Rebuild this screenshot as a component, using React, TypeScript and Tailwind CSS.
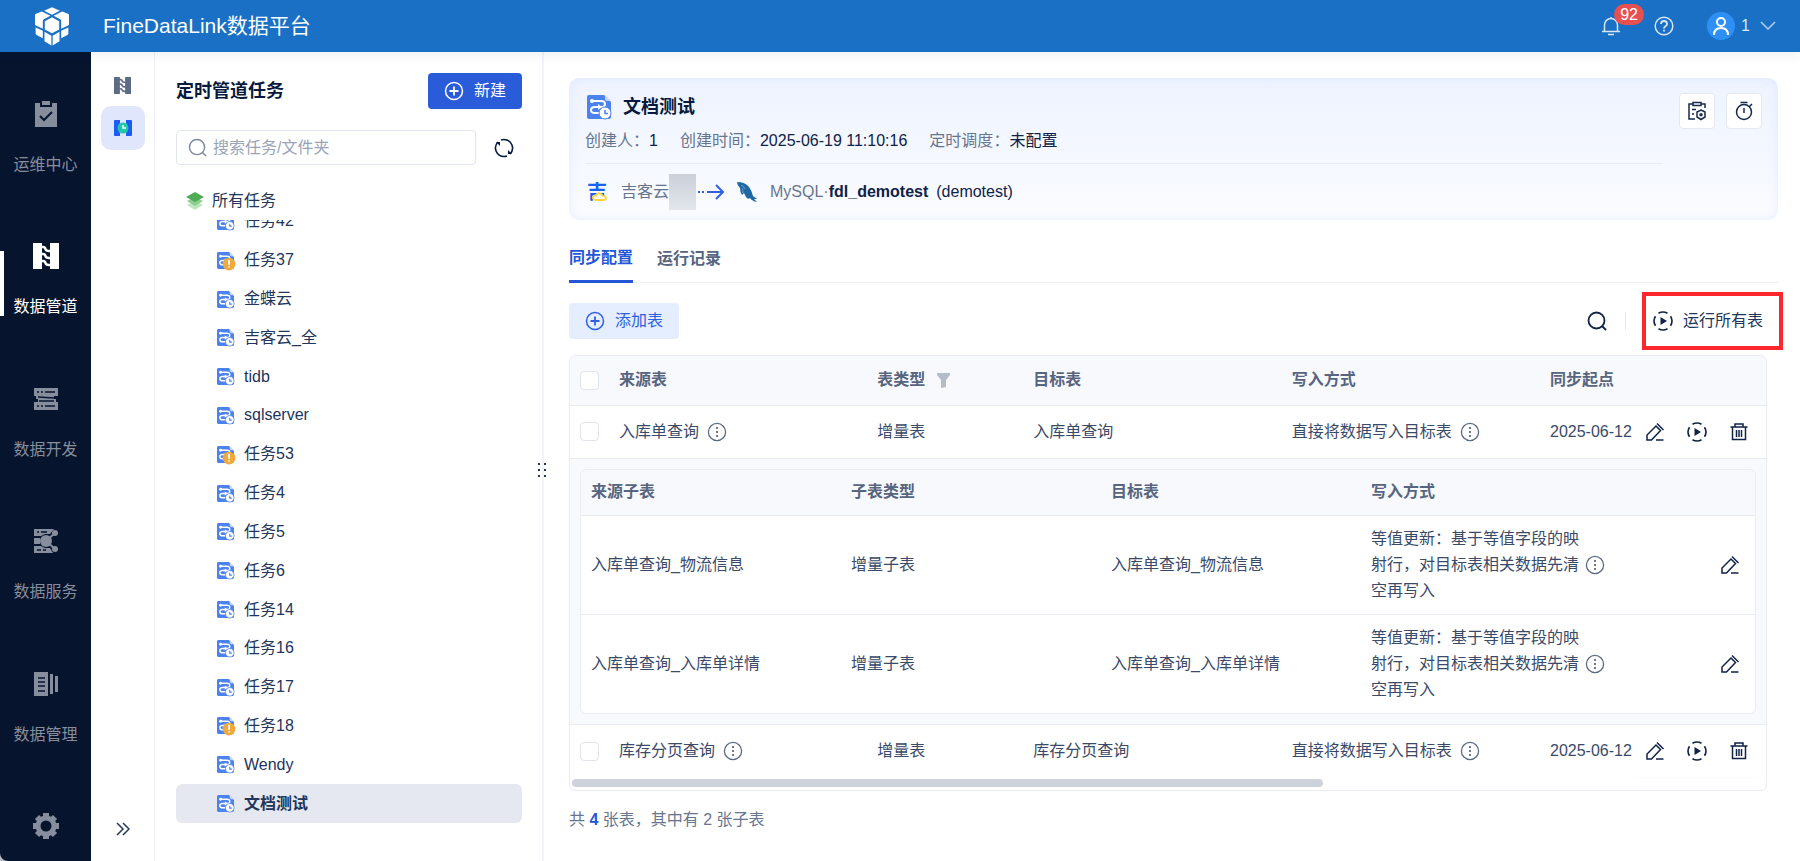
import { ReactNode, useState } from 'react';

interface IconProps {
  className?: string
}

interface Task {
  name: string
  warning?: boolean
}

interface SyncTable {
  source: string
  type: string
  target: string
  writeMode: string
  startPoint: string
  children?: SubTable[]
}

interface SubTable {
  source: string
  type: string
  target: string
  writeMode: string
}

const tasks: Task[] = [
  { name: '任务42' },
  { name: '任务37', warning: true },
  { name: '金蝶云' },
  { name: '吉客云_全' },
  { name: 'tidb' },
  { name: 'sqlserver' },
  { name: '任务53', warning: true },
  { name: '任务4' },
  { name: '任务5' },
  { name: '任务6' },
  { name: '任务14' },
  { name: '任务16' },
  { name: '任务17' },
  { name: '任务18', warning: true },
  { name: 'Wendy' },
  { name: '文档测试' },
];

const subWriteMode = '等值更新：基于等值字段的映射行，对目标表相关数据先清空再写入';

const syncTables: SyncTable[] = [
  {
    source: '入库单查询',
    type: '增量表',
    target: '入库单查询',
    writeMode: '直接将数据写入目标表',
    startPoint: '2025-06-12',
    children: [
      { source: '入库单查询_物流信息', type: '增量子表', target: '入库单查询_物流信息', writeMode: subWriteMode },
      { source: '入库单查询_入库单详情', type: '增量子表', target: '入库单查询_入库单详情', writeMode: subWriteMode },
    ],
  },
  {
    source: '库存分页查询',
    type: '增量表',
    target: '库存分页查询',
    writeMode: '直接将数据写入目标表',
    startPoint: '2025-06-12',
  },
];

function Logo() {
  return (
    <svg viewBox="0 0 110 118" className="h-[39px] w-9" fill="#fff">
      <path d="M55 0 79 11 55 23 31 11Z" />
      <path d="M3 26Q2 22 6 20L24 13 50 26 30 37Q27 39 27 43V66L6 56Q3 54 3 51Z" />
      <path d="M107 26Q108 22 104 20L86 13 60 26 80 37Q83 39 83 43V66L104 56Q107 54 107 51Z" />
      <path d="M55 31 77 43V68L55 80 33 68V43Z" />
      <path d="M5 62 27 72V95L8 85Q5 83 5 80Z" />
      <path d="M105 62 83 72V95L102 85Q105 83 105 80Z" />
      <path d="M32 75 53 87V117L32 104Z" />
      <path d="M78 75 57 87V117L78 104Z" />
    </svg>
  );
}

function ClipboardIcon({ className }: IconProps) {
  return (
    <svg viewBox="0 0 26 26" className={className}>
      <path d="M2 2H7V6H19V2H24V26H2Z" fill="currentColor" />
      <path d="M9 0H17V4H9Z" fill="currentColor" />
      <path d="M7 15 11 19 19 11" fill="none" stroke="#06142e" strokeWidth="2" />
    </svg>
  );
}

function PipelineIcon({ className }: IconProps) {
  return (
    <svg viewBox="0 0 26 26" className={className}>
      <path d="M0 0H9V26H0ZM17 0H26V26H17Z" fill="currentColor" />
      <path
        d="M8 4H10Q12 4 12.500 6T16 8H18M8 11H10Q12 11 12.500 13T16 15H18M8 18H10Q12 18 12.500 20T16 22H18"
        fill="none"
        stroke="currentColor"
        strokeWidth="2.600"
      />
    </svg>
  );
}

function DevelopIcon({ className }: IconProps) {
  return (
    <svg viewBox="0 0 26 26" className={className}>
      <path d="M1 2H25V10H21V13H23V16H25V24H1V16H5V13H3V10H1Z" fill="currentColor" />
      <path d="M4 6H6M8 6H10M12 6H22M4 20H6M8 20H10M12 20H22M5 11 21 12M6 15H21" fill="none" stroke="#06142e" strokeWidth="1.4" />
    </svg>
  );
}

function ServiceIcon({ className }: IconProps) {
  return (
    <svg viewBox="0 0 26 26" className={className}>
      <path d="M1 1H21L17 6H12L8 8H1ZM1 10H7V16H1ZM1 18H8L12 20H17L20 25H1Z" fill="currentColor" />
      <path d="M4 4H6M8 4H14M4 22H8M10 22H13" stroke="#06142e" strokeWidth="1.4" />
      <circle cx="13" cy="13" r="6" fill="currentColor" />
      <path d="M13 13 22 5M13 13 22 21" stroke="currentColor" strokeWidth="2" />
      <circle cx="22" cy="5" r="3" fill="currentColor" />
      <circle cx="22" cy="21" r="3" fill="currentColor" />
    </svg>
  );
}

function ManageIcon({ className }: IconProps) {
  return (
    <svg viewBox="0 0 26 26" className={className}>
      <path d="M1 1H15V25H1ZM17 3H20V23H17ZM22 5H25V21H22Z" fill="currentColor" />
      <path d="M5 7H12M5 11H12M5 15H12M5 20H12" stroke="#06142e" strokeWidth="1.6" />
    </svg>
  );
}

function GearIcon({ className }: IconProps) {
  return (
    <svg viewBox="0 0 26 26" className={className}>
      <circle cx="13" cy="13" r="8" fill="none" stroke="currentColor" strokeWidth="5" />
      <path
        d="M13 0V5M13 21V26M0 13H5M21 13H26M4 4 7 7M19 19 22 22M22 4 19 7M4 22 7 19"
        stroke="currentColor"
        strokeWidth="6"
      />
    </svg>
  );
}

function TimedPipelineIcon() {
  return (
    <svg viewBox="0 0 18 18" className="size-[18px]">
      <path d="M1 1H6V4Q3 9 6 14V17H1Q0 17 0 16V2Q0 1 1 1ZM17 1H12V4Q15 9 12 14V17H17Q18 17 18 16V2Q18 1 17 1Z" fill="#1a5cf5" />
      <circle cx="9" cy="9" r="5.5" fill="#22c7a5" />
      <path d="M9 6V9H12" fill="none" stroke="#fff" strokeWidth="1.5" />
    </svg>
  );
}

function TaskIcon({ className, warning }: IconProps & { warning?: boolean }) {
  return (
    <svg viewBox="0 0 24 24" className={className} overflow="visible">
      <path d="M2 0H17L24 7V22Q24 24 22 24H2Q0 24 0 22V2Q0 0 2 0Z" fill="#4c82ee" />
      <path d="M18 0 24 6H20Q18 6 18 4Z" fill="#c3d6fb" />
      <path d="M5 6H14Q18 6 18 9T15 12H8Q4 12 4 15T8 18H12" fill="none" stroke="#fff" strokeWidth="2" />
      <circle cx="5" cy="6" r="2" fill="#fff" />
      <path d="M11 9 15 12 11 15Z" fill="#fff" />
      {warning ? (
        <>
          <circle cx="17" cy="17" r="9" fill="#f2a93b" />
          <path d="M17 11V18M17 20V22" stroke="#fff" strokeWidth="2.5" />
        </>
      ) : (
        <>
          <circle cx="18" cy="18" r="6" fill="#fff" stroke="#4c82ee" />
          <path d="M18 15V18.500H21" fill="none" stroke="#4c82ee" strokeWidth="1.600" />
        </>
      )}
    </svg>
  );
}

function LayersIcon() {
  return (
    <svg viewBox="0 0 18 18" className="size-[18px]">
      <path d="M1 13 9 9 17 13 9 18Z" fill="#bfe5c1" />
      <path d="M1 9 9 5 17 9 9 14Z" fill="#8ccd90" />
      <path d="M0 5 9 0 18 5 9 10Z" fill="#4fac56" />
    </svg>
  );
}

function PlusCircleIcon() {
  return (
    <svg viewBox="0 0 20 20" className="size-5" fill="none" stroke="currentColor" strokeWidth="1.500">
      <circle cx="10" cy="10" r="8.500" />
      <path d="M10 5.500V14.500M5.500 10H14.500" strokeWidth="1.800" />
    </svg>
  );
}

function SearchIcon({ className }: IconProps) {
  return (
    <svg viewBox="0 0 20 20" className={className} fill="none" stroke="currentColor">
      <circle cx="9.500" cy="9.500" r="8" />
      <path d="M15 15 19 19" />
    </svg>
  );
}

function RefreshIcon() {
  return (
    <svg viewBox="0 0 20 20" className="size-5" fill="none" stroke="#071a3d" strokeWidth="1.600">
      <path d="M4 4A8.500 8.500 0 0 0 10 18.500M16 16A8.500 8.500 0 0 0 10 1.500" />
      <path d="M10 1.500A8.500 8.500 0 0 0 7 2M10 18.500A8.500 8.500 0 0 0 13 18" />
      <path d="M2 4H6V8ZM18 16H14V12Z" fill="#071a3d" stroke="none" />
    </svg>
  );
}

function RunIcon() {
  return (
    <svg viewBox="0 0 20 20" className="size-5" fill="none" stroke="#0f2247" strokeWidth="1.600">
      <path d="M5.500 2.300A9 9 0 0 1 14.500 2.300M17.500 5.200A9 9 0 0 1 17.500 14.800M14.500 17.700A9 9 0 0 1 5.500 17.700M2.500 14.800A9 9 0 0 1 2.500 5.200" />
      <path d="M7.500 6 14 10 7.500 14Z" fill="#0f2247" stroke="none" />
    </svg>
  );
}

function EditIcon() {
  return (
    <svg viewBox="0 0 20 20" className="size-5" fill="none" stroke="#0f2247" strokeWidth="1.500">
      <path d="M2 18V13L11 4 15.500 8.500 6.500 18ZM11 18H18.500M12 1.500 18.500 8" />
    </svg>
  );
}

function TrashIcon() {
  return (
    <svg viewBox="0 0 20 20" className="size-5" fill="none" stroke="#0f2247" strokeWidth="1.500">
      <path d="M1.500 5H18.500M6 5V2H14V5M3.500 5V17.500H16.500V5M7.500 8V15M10 8V15M12.500 8V15" />
    </svg>
  );
}

function MoreIcon() {
  return (
    <svg viewBox="0 0 20 20" className="size-5 shrink-0" fill="none" stroke="#5c6b85">
      <circle cx="10" cy="10" r="8.600" strokeWidth="1.300" />
      <path d="M10 5V7M10 9V11M10 13V15" strokeWidth="1.800" />
    </svg>
  );
}

function JikeyunIcon() {
  return (
    <svg viewBox="0 0 20 20" className="size-5">
      <text x="0" y="17" fontSize="20" fontWeight="700" fill="#1463f3">吉</text>
      <path
        d="M8 18Q5 17 6 14.500Q7 13 9 13.500Q11 10 14 12Q15 13 16 14Q19 14 19 16T17 18Z"
        fill="#fff"
        stroke="#fbd63c"
        strokeWidth="1.800"
      />
    </svg>
  );
}

function DolphinIcon() {
  return (
    <svg viewBox="0 0 21 21" className="size-[21px]">
      <path
        d="M0 0Q8 0 12 5Q15 9 16 14L20 17 17 17 20 20Q15 19 13 16Q11 18 9 15L7 11 5 13Q3 10 3 6Q0 3 0 0Z"
        fill="#2068a4"
      />
      <path d="M4 3Q7 4 8 7M6 11Q6 7 5 6" fill="none" stroke="#7fa9cd" strokeWidth="0.800" />
    </svg>
  );
}

const navItems = [
  { label: '运维中心', Icon: ClipboardIcon },
  { label: '数据管道', Icon: PipelineIcon, active: true },
  { label: '数据开发', Icon: DevelopIcon },
  { label: '数据服务', Icon: ServiceIcon },
  { label: '数据管理', Icon: ManageIcon },
];

function TopBar() {
  return (
    <header className="relative z-20 flex h-[52px] shrink-0 items-center bg-[#1a70c5] pl-[34px] pr-6 text-white shadow-[0_2px_12px_rgba(20,40,90,0.08)]">
      <Logo />
      <h1 className="ml-[33px] text-[21px]">FineDataLink数据平台</h1>
      <div className="ml-auto flex items-center">
        <button aria-label="消息" className="relative">
          <svg viewBox="0 0 20 20" className="size-5" fill="none" stroke="#d7e6f6" strokeWidth="1.500">
            <path d="M3.500 15V9A6.500 6.500 0 0 1 16.500 9V15M1 15.500H19M7 18.500H13M10 1V3" />
          </svg>
          <span className="absolute -top-3 left-[13px] flex h-[21px] w-[30px] items-center justify-center rounded-full bg-[#e8504f] text-base">
            92
          </span>
        </button>
        <button aria-label="帮助" className="ml-[33px]">
          <svg viewBox="0 0 20 20" className="size-5" fill="none" stroke="#d7e6f6" strokeWidth="1.500">
            <circle cx="10" cy="10" r="8.800" />
            <path d="M7 8Q7 5 10 5T13 8Q13 9.500 11.500 10.200Q10 11 10 12.500M10 13.800V15.600" strokeWidth="1.800" />
          </svg>
        </button>
        <button className="ml-[33px] flex items-center">
          <span className="flex size-7 items-center justify-center rounded-full bg-[#2e90f5]">
            <svg viewBox="0 0 18 18" className="size-[18px]" fill="none" stroke="#fff" strokeWidth="2">
              <circle cx="9" cy="5" r="4" />
              <path d="M2 18Q2 11 9 11T16 18" />
            </svg>
          </span>
          <span className="ml-1.5 text-base text-[#d7e6f6]">1</span>
          <svg viewBox="0 0 16 10" className="ml-2.5 h-2.5 w-4" fill="none" stroke="#b5cfec" strokeWidth="1.500">
            <path d="M1 1 8 8 15 1" />
          </svg>
        </button>
      </div>
    </header>
  );
}

function SideNav() {
  return (
    <div className="shrink-0 bg-[#b9bcc2]">
      <nav className="flex h-full w-[91px] flex-col items-center justify-between rounded-bl-lg bg-[#06142e] pb-[22px] pt-[49px] text-[#868e9d]">
        {navItems.map(({ label, Icon, active }) => (
          <a
            key={label}
            href="#"
            className={active
              ? 'relative flex w-full flex-col items-center gap-[26px] text-white'
              : 'relative flex w-full flex-col items-center gap-[26px]'}
          >
            {active && <span className="absolute left-0 top-2 h-[65px] w-1 bg-white" />}
            <Icon className="size-[26px]" />
            <span className="text-base">{label}</span>
          </a>
        ))}
        <a href="#" aria-label="设置">
          <GearIcon className="size-[26px]" />
        </a>
      </nav>
    </div>
  );
}

function PipelineSwitch() {
  return (
    <div className="flex w-16 shrink-0 flex-col items-center border-r border-[#eceef4] pb-5 pt-[25px]">
      <button aria-label="实时管道任务" className="text-[#5d6b85]">
        <PipelineIcon className="size-[17px]" />
      </button>
      <button aria-label="定时管道任务" className="mt-3 flex size-11 items-center justify-center rounded-[10px] bg-[#e0e6fb]">
        <TimedPipelineIcon />
      </button>
      <button aria-label="展开" className="mt-auto">
        <svg viewBox="0 0 14 14" className="h-6 w-3.5" fill="none" stroke="#26395c" strokeWidth="1.500">
          <path d="M1 1 7 7 1 13M7 1 13 7 7 13" />
        </svg>
      </button>
    </div>
  );
}

function TaskPanel() {
  const [selected, setSelected] = useState('文档测试');

  return (
    <aside className="relative flex w-[389px] shrink-0 flex-col border-r-2 border-[#f1f3f8] pb-[38px] pl-[21px] pr-5 pt-[21px]">
      <div className="flex items-center justify-between">
        <h2 className="text-lg font-bold text-[#071a3d]">定时管道任务</h2>
        <button className="flex h-9 items-center gap-2.5 rounded bg-[#2a5cda] px-4 text-base text-white">
          <PlusCircleIcon />
          新建
        </button>
      </div>
      <div className="mt-[21px] flex items-center">
        <label className="flex h-[35px] w-[300px] items-center gap-1.5 rounded border border-[#e2e6f0] px-[11px] text-[#7c88a0]">
          <SearchIcon className="size-[19px] shrink-0 stroke-[1.5]" />
          <input
            aria-label="搜索任务"
            placeholder="搜索任务/文件夹"
            className="w-full text-base outline-none placeholder:text-[#9aa4b6]"
          />
        </label>
        <button aria-label="刷新" className="ml-[18px]">
          <RefreshIcon />
        </button>
      </div>
      <div className="mt-6 flex h-6 items-center gap-2 pl-2.5 text-[#22355a]">
        <LayersIcon />
        <span className="text-base">所有任务</span>
      </div>
      <div className="mt-[7px] min-h-0 flex-1 overflow-hidden">
        <ul className="-mt-[18px] flex h-[calc(100%+18px)] flex-col">
          {tasks.map((task) => (
            <li key={task.name} className="min-h-0 flex-1">
              <button
                onClick={() => setSelected(task.name)}
                className={task.name === selected
                  ? 'flex h-full w-full items-center gap-2.5 rounded-md bg-[#e5e8f0] pl-[41px] text-base font-bold text-[#22355a]'
                  : 'flex h-full w-full items-center gap-2.5 pl-[41px] text-base text-[#22355a]'}
              >
                <TaskIcon className="size-[17px]" warning={task.warning} />
                {task.name}
              </button>
            </li>
          ))}
        </ul>
      </div>
      <div className="absolute left-full top-1/2 z-10 mt-1 -ml-1 grid h-[18px] grid-cols-2 items-center gap-x-1.5">
        {[0, 1, 2, 3, 4, 5].map((i) => (
          <span key={i} className="size-0.5 bg-[#22355a]" />
        ))}
      </div>
    </aside>
  );
}

function Field({ label, children }: { label: string; children: ReactNode }) {
  return (
    <div className="flex">
      <dt className="text-[#67758e]">{label}：</dt>
      <dd className="text-[#0f2247]">{children}</dd>
    </div>
  );
}

function TaskHeader() {
  return (
    <section className="flex items-start justify-between rounded-[10px] bg-linear-to-b from-[#eef3ff] to-[#fafcff] px-4 pb-2 pt-[15px] shadow-[inset_0_0_10px_rgba(180,200,250,0.25)]">
      <div className="w-[1078px]">
        <div className="flex h-7 items-center gap-3">
          <TaskIcon className="ml-0.5 size-6" />
          <h2 className="text-lg font-bold text-[#071a3d]">文档测试</h2>
        </div>
        <dl className="mt-2 flex h-6 items-center gap-[22px] text-base">
          <Field label="创建人">1</Field>
          <Field label="创建时间">2025-06-19 11:10:16</Field>
          <Field label="定时调度">未配置</Field>
        </dl>
        <div className="mt-2.5 flex h-[49px] items-center border-t border-[#e6eaf2] pt-2 text-base">
          <span className="ml-0.5">
            <JikeyunIcon />
          </span>
          <span className="ml-3.5 text-[#67758e]">吉客云</span>
          <span className="h-9 w-[27px] bg-linear-to-b from-[#cbd0d9] to-[#e2e6ec]" />
          <svg viewBox="0 0 27 16" className="ml-0.5 h-4 w-[27px]" fill="none" stroke="#2f5fe0" strokeWidth="2">
            <path d="M0 8H2M4 8H6M9 8H25M18 1 25 8 18 15" />
          </svg>
          <span className="ml-3">
            <DolphinIcon />
          </span>
          <span className="ml-3 text-[#67758e]">
            MySQL·<b className="text-[#0f2247]">fdl_demotest</b>
          </span>
          <span className="ml-2 text-[#0f2247]">(demotest)</span>
        </div>
      </div>
      <div className="flex gap-[11px]">
        <button aria-label="任务设置" className="flex size-9 items-center justify-center rounded border border-[#e4e8f1] bg-white">
          <svg viewBox="0 0 20 20" className="size-5" fill="none" stroke="#16294e" strokeWidth="1.500">
            <path d="M8 18H2V3H6M14 3H18V7M6 1.500H14V4.500H6ZM5 8.500H9M5 13H7" />
            <path d="M14 9 18 11V16L14 18.500 10 16V11Z" />
            <circle cx="14" cy="13.800" r="1" />
          </svg>
        </button>
        <button aria-label="定时设置" className="flex size-9 items-center justify-center rounded border border-[#e4e8f1] bg-white">
          <svg viewBox="0 0 20 20" className="size-5" fill="none" stroke="#16294e" strokeWidth="1.500">
            <circle cx="10" cy="11" r="7.500" />
            <path d="M6.500 1.500H13.500M10 7V12M15.500 5.500 18 3" />
          </svg>
        </button>
      </div>
    </section>
  );
}

function Checkbox({ label }: { label: string }) {
  return (
    <input
      type="checkbox"
      aria-label={label}
      className="block size-[19px] appearance-none rounded border border-[#e0e4ee] bg-white checked:bg-[#2a5cda]"
    />
  );
}

function SubTableList({ rows }: { rows: SubTable[] }) {
  return (
    <div className="overflow-hidden rounded-md border border-[#e9ecf3]">
      <table className="w-full table-fixed">
        <colgroup>
          <col />
          <col />
          <col />
          <col />
          <col className="w-[134px]" />
        </colgroup>
        <thead>
          <tr className="h-[46px] text-left text-[#57657f]">
            <th className="pl-2.5">来源子表</th>
            <th className="pl-2.5">子表类型</th>
            <th className="pl-2.5">目标表</th>
            <th className="pl-2.5">写入方式</th>
            <th aria-label="操作" />
          </tr>
        </thead>
        <tbody>
          {rows.map((row) => (
            <tr key={row.source} className="border-t border-[#e9ecf3] bg-white">
              <td className="pl-2.5">{row.source}</td>
              <td className="pl-2.5">{row.type}</td>
              <td className="pl-2.5">{row.target}</td>
              <td className="py-2.5 pl-2.5">
                <div className="flex items-center gap-1.5">
                  <p className="w-[208px] leading-[26px]">{row.writeMode}</p>
                  <MoreIcon />
                </div>
              </td>
              <td>
                <button aria-label="编辑" className="ml-auto mr-[15px] block">
                  <EditIcon />
                </button>
              </td>
            </tr>
          ))}
        </tbody>
      </table>
    </div>
  );
}

function SyncTableRows({ row }: { row: SyncTable }) {
  return (
    <>
      <tr className="h-[53px] border-t border-[#e9ecf3]">
        <td className="pl-2.5"><Checkbox label={row.source} /></td>
        <td className="pl-2.5">
          <div className="flex items-center gap-2">
            {row.source}
            <MoreIcon />
          </div>
        </td>
        <td className="pl-2.5">{row.type}</td>
        <td className="pl-2.5">{row.target}</td>
        <td className="pl-2.5">
          <div className="flex items-center gap-2">
            {row.writeMode}
            <MoreIcon />
          </div>
        </td>
        <td className="whitespace-nowrap pl-2.5">{row.startPoint}</td>
        <td className="sticky right-0 bg-white shadow-[-3px_0_8px_rgba(30,40,70,0.10)] [clip-path:inset(0_0_0_-12px)]">
          <div className="flex items-center gap-[22px] pl-3">
            <button aria-label="编辑"><EditIcon /></button>
            <button aria-label="运行"><RunIcon /></button>
            <button aria-label="删除"><TrashIcon /></button>
          </div>
        </td>
      </tr>
      {row.children && (
        <tr className="border-t border-[#e9ecf3] bg-[#f7f9fd]">
          <td colSpan={7} className="p-2.5">
            <SubTableList rows={row.children} />
          </td>
        </tr>
      )}
    </>
  );
}

function SyncConfig() {
  return (
    <div className="mr-[11px] mt-4 overflow-hidden rounded-md border border-[#e9ecf3]">
      <table className="w-full table-fixed text-base text-[#3a4a68]">
        <colgroup>
          <col className="w-[39px]" />
          <col />
          <col className="w-[156px]" />
          <col />
          <col />
          <col className="w-[93px]" />
          <col className="w-[133px]" />
        </colgroup>
        <thead>
          <tr className="h-[49px] bg-[#f7f9fd] text-left text-[#57657f]">
            <th className="pl-2.5"><Checkbox label="全选" /></th>
            <th className="pl-2.5">来源表</th>
            <th className="pl-2.5">
              <div className="flex items-center gap-3">
                表类型
                <svg viewBox="0 0 13 15" className="h-[15px] w-[13px]" fill="#b5bcc9">
                  <path d="M0 0H13V2L9 7V14L4 15V7L0 2Z" />
                </svg>
              </div>
            </th>
            <th className="pl-2.5">目标表</th>
            <th className="pl-2.5">写入方式</th>
            <th className="whitespace-nowrap pl-2.5">同步起点</th>
            <th
              aria-label="操作"
              className="sticky right-0 bg-[#f7f9fd] shadow-[-3px_0_8px_rgba(30,40,70,0.10)] [clip-path:inset(0_0_0_-12px)]"
            />
          </tr>
        </thead>
        <tbody>
          {syncTables.map((row) => (
            <SyncTableRows key={row.source} row={row} />
          ))}
        </tbody>
      </table>
      <div className="px-0.5 pb-[3px] pt-px">
        <div className="h-2 w-[63%] rounded-full bg-[#ced2da]" />
      </div>
    </div>
  );
}

export default function App() {
  return (
    <div className="flex h-screen flex-col overflow-hidden bg-white font-['Liberation_Sans','Noto_Sans_CJK_SC',sans-serif]">
      <TopBar />
      <div className="flex min-h-0 flex-1">
        <SideNav />
        <PipelineSwitch />
        <TaskPanel />
        <main className="min-w-0 flex-1 overflow-hidden pl-[25px] pr-[22px] pt-[26px]">
          <TaskHeader />
          <div role="tablist" className="mt-6 flex h-[39px] gap-6 border-b border-[#eff1f6] text-base font-bold">
            <button role="tab" aria-selected="true" className="-mb-px border-b-3 border-[#2456d6] pb-2 text-[#2456d6]">
              同步配置
            </button>
            <button role="tab" aria-selected="false" className="pb-2 text-[#57657f]">
              运行记录
            </button>
          </div>
          <div className="mt-5 flex h-9 items-center text-base">
            <button className="flex h-9 items-center gap-2.5 rounded bg-[#e5eeff] px-4 text-[#2f5fe0]">
              <PlusCircleIcon />
              添加表
            </button>
            <button aria-label="搜索" className="ml-auto mr-[18px] text-[#0f2247]">
              <SearchIcon className="size-5 stroke-[1.8]" />
            </button>
            <span className="h-[18px] w-px bg-[#e2e6ee]" />
            <button className="-mr-[5px] ml-4 flex h-[58px] items-center gap-2.5 border-4 border-[#fc282d] pl-[7px] pr-4 text-[#22355a]">
              <RunIcon />
              运行所有表
            </button>
          </div>
          <SyncConfig />
          <p className="mt-[17px] text-base text-[#67758e]">
            共 <b className="text-[#2456d6]">4</b> 张表，其中有 2 张子表
          </p>
        </main>
      </div>
    </div>
  );
}
